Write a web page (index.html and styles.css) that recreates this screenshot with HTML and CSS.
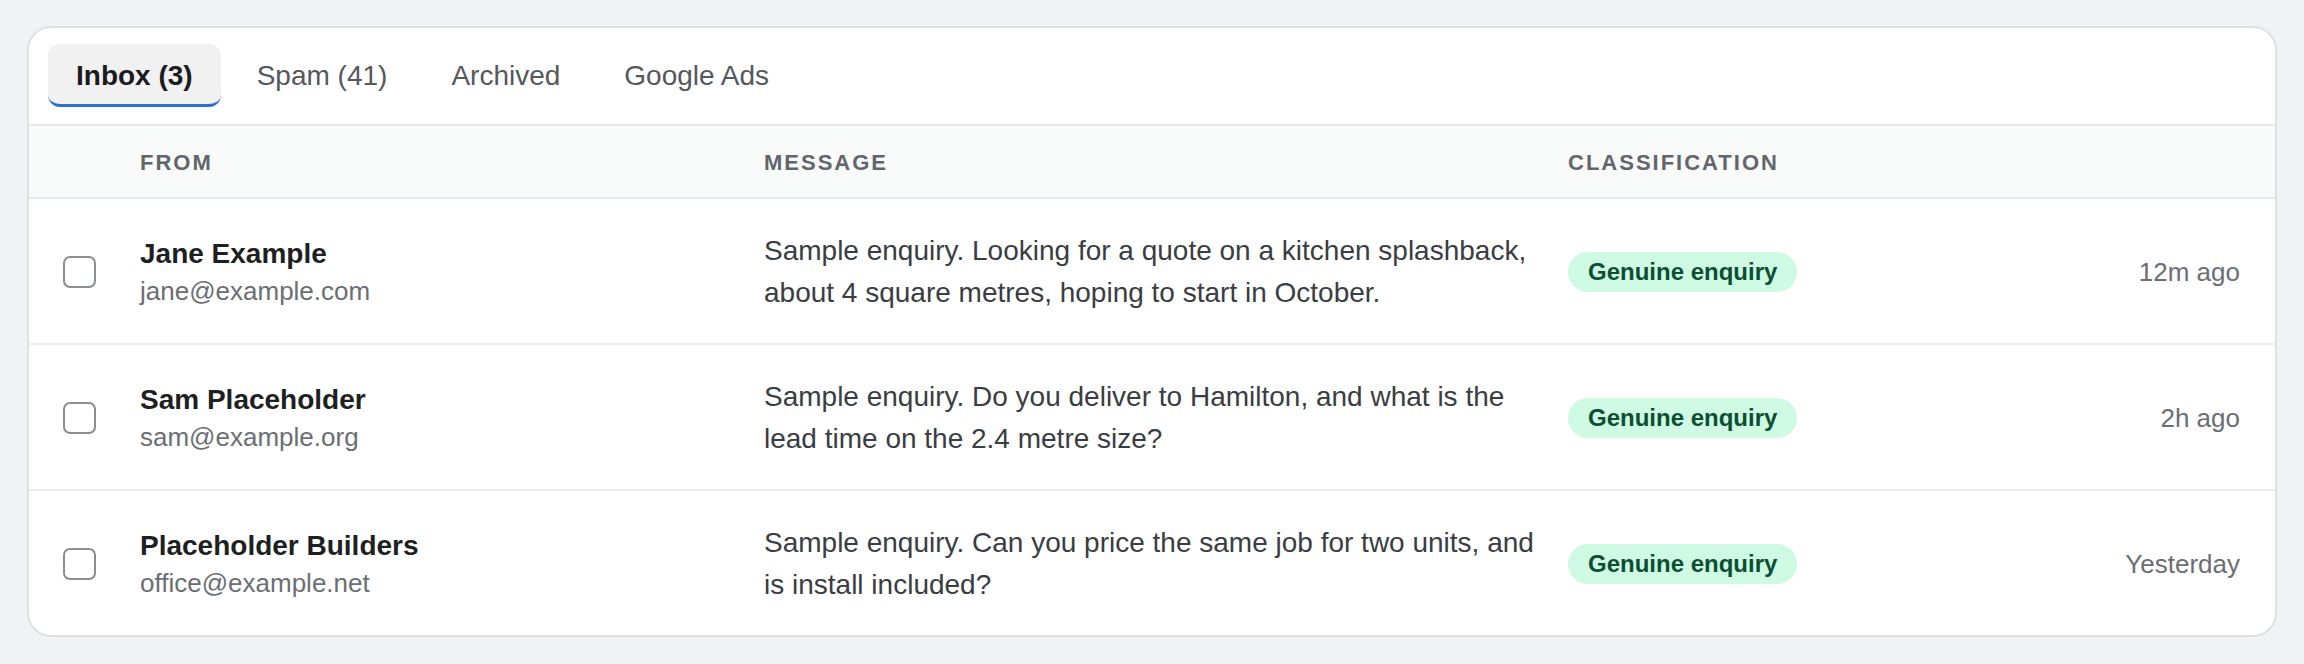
FILE: index.html
```html
<!DOCTYPE html>
<html lang="en">
<head>
<meta charset="utf-8">
<title>Inbox</title>
<link rel="stylesheet" href="styles.css">
</head>
<body>
<div class="card">
  <nav class="tabs">
    <a class="tab active">Inbox (3)</a>
    <a class="tab">Spam (41)</a>
    <a class="tab">Archived</a>
    <a class="tab">Google Ads</a>
  </nav>
  <div class="table">
    <div class="row head">
      <div></div>
      <div class="th">FROM</div>
      <div class="th">MESSAGE</div>
      <div class="th">CLASSIFICATION</div>
      <div></div>
    </div>
    <div class="row">
      <div><input class="check" type="checkbox"></div>
      <div class="from"><div class="name">Jane Example</div><div class="email">jane@example.com</div></div>
      <div class="msg">Sample enquiry. Looking for a quote on a kitchen splashback, about 4 square metres, hoping to start in October.</div>
      <div><span class="badge">Genuine enquiry</span></div>
      <div class="time">12m ago</div>
    </div>
    <div class="row">
      <div><input class="check" type="checkbox"></div>
      <div class="from"><div class="name">Sam Placeholder</div><div class="email">sam@example.org</div></div>
      <div class="msg">Sample enquiry. Do you deliver to Hamilton, and what is the lead time on the 2.4 metre size?</div>
      <div><span class="badge">Genuine enquiry</span></div>
      <div class="time">2h ago</div>
    </div>
    <div class="row last">
      <div><input class="check" type="checkbox"></div>
      <div class="from"><div class="name">Placeholder Builders</div><div class="email">office@example.net</div></div>
      <div class="msg">Sample enquiry. Can you price the same job for two units, and is install included?</div>
      <div><span class="badge">Genuine enquiry</span></div>
      <div class="time">Yesterday</div>
    </div>
  </div>
</div>
</body>
</html>
```
FILE: styles.css
```css
* { box-sizing: border-box; }
html, body { margin: 0; }
body {
  background: #f1f2f4;
  padding: 26px 27px 27px 27px;
  font-family: "Liberation Sans", Arial, sans-serif;
  color: #1d1f22;
}
.card {
  background: #ffffff;
  border: 2px solid #dfe0e3;
  border-radius: 24px;
  overflow: hidden;
}
.tabs {
  display: flex;
  gap: 8px;
  padding: 16px 18px 17px 19px;
  border-bottom: 2px solid #e6e7e9;
}
.tab {
  display: block;
  height: 63px;
  line-height: 56px;
  padding: 4px 28px 0 28px;
  font-size: 28px;
  color: #55585d;
  border-radius: 12px;
  border-bottom: 3px solid transparent;
}
.tab.active {
  background: #f1f1f2;
  color: #1a1b1e;
  font-weight: bold;
  border-bottom-color: #2f6fcc;
}
.row {
  display: grid;
  grid-template-columns: 77px 624px 804px 1fr auto;
  align-items: center;
  padding: 31px 35px 29px 34px;
  border-bottom: 2px solid #eceef0;
}
.row.last { border-bottom: none; }
.row.head {
  background: #f9fafa;
  padding-top: 24px;
  padding-bottom: 22px;
  border-bottom: 2px solid #e6e7e9;
}
.th {
  font-size: 22px;
  line-height: 25px;
  font-weight: bold;
  letter-spacing: 2px;
  color: #62666c;
}
.check {
  appearance: none;
  -webkit-appearance: none;
  display: block;
  margin: 0;
  width: 33px;
  height: 32px;
  border: 2px solid #8a8d91;
  border-radius: 7px;
  background: #ffffff;
}
.name {
  font-size: 28px;
  line-height: 38px;
  font-weight: bold;
  color: #1d1f22;
}
.email {
  font-size: 26px;
  line-height: 36px;
  color: #6b6e73;
}
.msg {
  font-size: 28px;
  line-height: 42px;
  color: #3a3d42;
  padding-right: 22px;
}
.badge {
  display: inline-block;
  background: #cffae3;
  color: #0b4f33;
  font-size: 24px;
  font-weight: bold;
  line-height: 28px;
  padding: 6px 20px;
  border-radius: 20px;
}
.time {
  font-size: 26px;
  line-height: 38px;
  color: #6b6e73;
  text-align: right;
}
```
